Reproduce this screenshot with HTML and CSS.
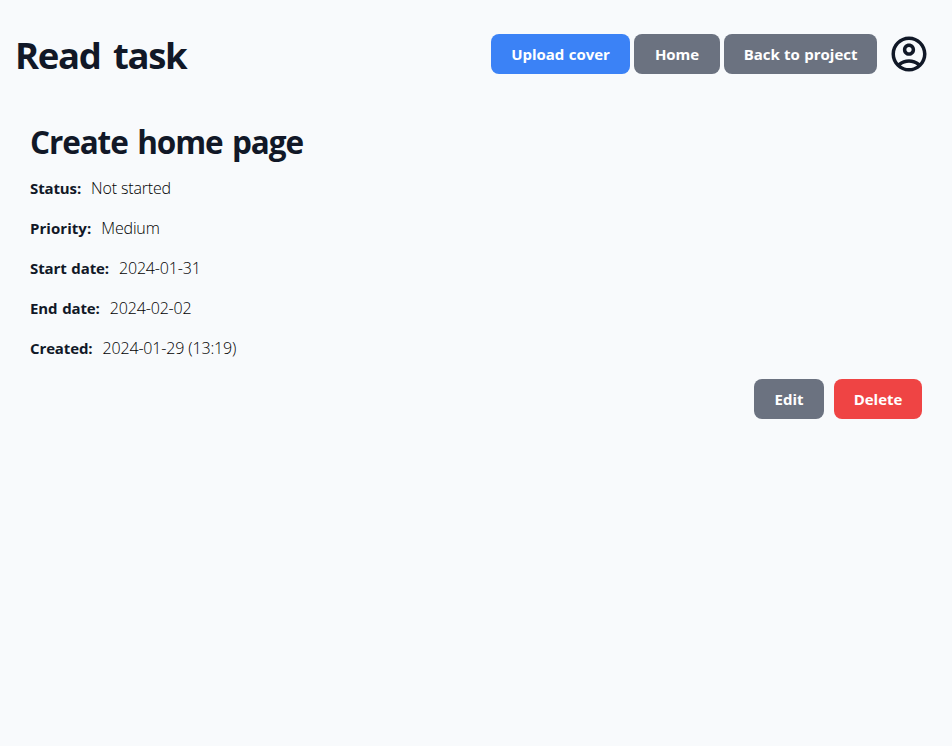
FILE: index.html
```html
<!DOCTYPE html>
<html lang="en">
<head>
<meta charset="utf-8">
<title>Read task</title>
<link rel="stylesheet" href="styles.css">
</head>
<body>
<header class="topbar">
  <h1 class="page-title">Read task</h1>
  <nav class="nav">
    <a class="btn btn-blue w-upload">Upload cover</a>
    <a class="btn btn-gray w-home">Home</a>
    <a class="btn btn-gray w-back">Back to project</a>
    <svg class="profile" viewBox="0 0 24 24" fill="currentColor"><path d="M12 2C6.480 2 2 6.480 2 12s4.480 10 10 10 10-4.480 10-10S17.520 2 12 2zM7.350 18.500C8.660 17.560 10.260 17 12 17s3.340.56 4.650 1.500C15.340 19.440 13.740 20 12 20s-3.340-.56-4.650-1.500zm10.790-1.380C16.450 15.800 14.320 15 12 15s-4.450.8-6.140 2.120C4.700 15.730 4 13.950 4 12c0-4.420 3.580-8 8-8s8 3.580 8 8c0 1.950-.7 3.730-1.860 5.120z"/><path d="M12 6c-1.930 0-3.500 1.570-3.500 3.500S10.070 13 12 13s3.500-1.570 3.500-3.500S13.930 6 12 6zm0 5c-.83 0-1.500-.67-1.500-1.500S11.170 8 12 8s1.500.67 1.500 1.500S12.830 11 12 11z"/></svg>
  </nav>
</header>
<main class="task">
  <h2 class="task-title">Create home page</h2>
  <dl class="fields">
    <div class="field"><dt>Status:</dt><dd>Not started</dd></div>
    <div class="field"><dt class="spaced">Priority:</dt><dd>Medium</dd></div>
    <div class="field"><dt>Start date:</dt><dd>2024-01-31</dd></div>
    <div class="field"><dt>End date:</dt><dd>2024-02-02</dd></div>
    <div class="field"><dt>Created:</dt><dd>2024-01-29 (13:19)</dd></div>
  </dl>
  <div class="actions">
    <a class="btn btn-gray w-edit">Edit</a>
    <a class="btn btn-red w-delete">Delete</a>
  </div>
</main>
</body>
</html>
```
FILE: styles.css
```css
* { box-sizing: border-box; }
body { margin: 0; min-height: 746px; background: #f8fafc; color: #111827; font: 16px/24px "Segoe UI", "Open Sans", "Noto Sans", sans-serif; }
h1, h2, dl, dd { margin: 0; }
.topbar { display: flex; align-items: center; justify-content: space-between; height: 108px; padding: 0 22px 0 15px; }
.page-title { padding-top: 2px; font-size: 36.5px; line-height: 48px; font-weight: 700; letter-spacing: -1.35px; word-spacing: 4.5px; white-space: nowrap; }
.nav { display: flex; align-items: center; gap: 4px; }
.btn { display: flex; align-items: center; justify-content: center; height: 40px; border-radius: 8px; color: #fff; font-size: 15px; font-weight: 700; letter-spacing: -0.03px; word-spacing: 0.6px; white-space: nowrap; }
.btn-blue { background: #3b82f6; }
.btn-gray { background: #6b7280; }
.btn-red { background: #ef4444; }
.w-upload { width: 139px; }
.w-home { width: 86px; }
.w-back { width: 153px; }
.w-edit { width: 70px; }
.w-delete { width: 88px; }
.profile { width: 42px; height: 42px; margin-left: 7px; }
.task { padding: 14px 30px; }
.task-title { font-size: 31.5px; line-height: 40px; font-weight: 700; letter-spacing: -1.1px; word-spacing: 2.4px; white-space: nowrap; }
.fields { margin-top: 14px; display: grid; gap: 16px; }
.field { display: flex; gap: 10px; white-space: nowrap; }
.field dt { font-size: 15px; font-weight: 700; letter-spacing: -0.12px; word-spacing: 1px; }
.field .spaced { letter-spacing: 0.05px; }
.field dd { color: #000; font-weight: 300; letter-spacing: -0.16px; }
.actions { display: flex; justify-content: flex-end; gap: 10px; margin-top: 19px; }
```
